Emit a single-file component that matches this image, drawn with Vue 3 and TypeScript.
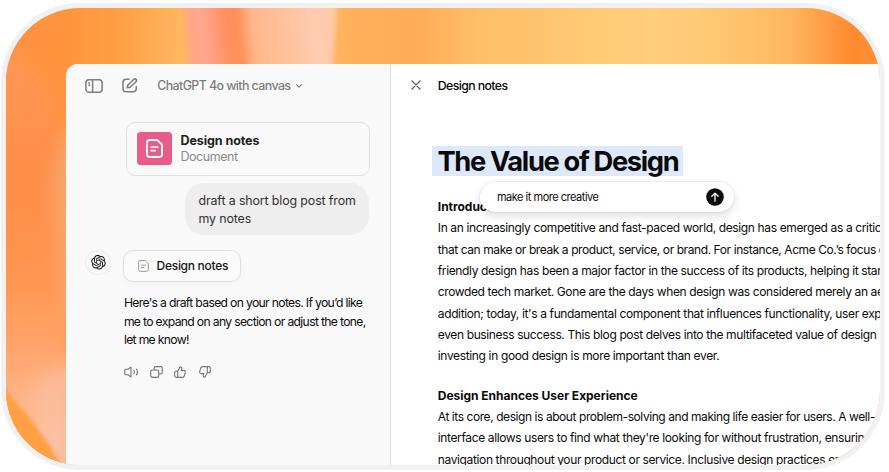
<script setup lang="ts">
interface Line {
  text: string
  tracking: number
}

interface Section {
  heading: string
  lines: Line[]
}

const sections: Section[] = [
  {
    heading: 'Introduction',
    lines: [
      { text: 'In an increasingly competitive and fast-paced world, design has emerged as a critic', tracking: -0.37 },
      { text: 'that can make or break a product, service, or brand. For instance, Acme Co.’s focus o', tracking: -0.42 },
      { text: 'friendly design has been a major factor in the success of its products, helping it star', tracking: -0.37 },
      { text: 'crowded tech market. Gone are the days when design was considered merely an ae', tracking: -0.38 },
      { text: "addition; today, it's a fundamental component that influences functionality, user exp", tracking: -0.37 },
      { text: 'even business success. This blog post delves into the multifaceted value of design', tracking: -0.37 },
      { text: 'investing in good design is more important than ever.', tracking: -0.35 },
    ],
  },
  {
    heading: 'Design Enhances User Experience',
    lines: [
      { text: 'At its core, design is about problem-solving and making life easier for users. A well-', tracking: -0.43 },
      { text: "interface allows users to find what they're looking for without frustration, ensuring", tracking: -0.37 },
      { text: 'navigation throughout your product or service. Inclusive design practices en', tracking: -0.37 },
    ],
  },
]
</script>

<template>
  <div class="frame">
    <svg class="backdrop" viewBox="6 8 874 458" preserveAspectRatio="none">
      <defs>
        <linearGradient id="sky" gradientUnits="userSpaceOnUse" x1="6" y1="0" x2="880" y2="0">
          <stop offset="0" stop-color="#ff9140" />
          <stop offset="0.07" stop-color="#ff943f" />
          <stop offset="0.13" stop-color="#ff9f46" />
          <stop offset="0.2" stop-color="#ffb75d" />
          <stop offset="0.36" stop-color="#ffb765" />
          <stop offset="0.4" stop-color="#ffb05b" />
          <stop offset="0.47" stop-color="#ffac56" />
          <stop offset="0.54" stop-color="#ffbe68" />
          <stop offset="0.65" stop-color="#ffc971" />
          <stop offset="0.74" stop-color="#ffcf7f" />
          <stop offset="0.84" stop-color="#ffc46c" />
          <stop offset="0.9" stop-color="#ffb55c" />
          <stop offset="0.945" stop-color="#ff9840" />
          <stop offset="0.97" stop-color="#ff8a2e" />
          <stop offset="1" stop-color="#ff8f34" />
        </linearGradient>
        <linearGradient id="band" gradientUnits="userSpaceOnUse" x1="182" y1="36" x2="336" y2="20">
          <stop offset="0" stop-color="#ffa97d" />
          <stop offset="0.14" stop-color="#ffa88e" />
          <stop offset="0.3" stop-color="#ff8e5c" />
          <stop offset="0.37" stop-color="#ff9059" />
          <stop offset="0.46" stop-color="#ffb78a" />
          <stop offset="0.65" stop-color="#ffc199" />
          <stop offset="0.85" stop-color="#ffcbb0" />
          <stop offset="1" stop-color="#ffc9a6" />
        </linearGradient>
        <linearGradient id="side" gradientUnits="userSpaceOnUse" x1="0" y1="60" x2="0" y2="466">
          <stop offset="0" stop-color="#ff9654" />
          <stop offset="0.3" stop-color="#ff8e48" />
          <stop offset="0.55" stop-color="#ff9651" />
          <stop offset="0.75" stop-color="#ffa873" />
          <stop offset="0.9" stop-color="#fdbd96" />
          <stop offset="1" stop-color="#f9c3ad" />
        </linearGradient>
        <filter id="soft" x="-50%" y="-50%" width="200%" height="200%"><feGaussianBlur stdDeviation="9" /></filter>
        <filter id="edge" x="-20%" y="-20%" width="140%" height="140%"><feGaussianBlur stdDeviation="2.200" /></filter>
      </defs>
      <rect x="6" y="8" width="874" height="458" fill="url(#sky)" />
      <path d="M183 -5L188 75H332L338 -5z" fill="url(#band)" filter="url(#edge)" />
      <path d="M-30 0L20 55L48 90L72 170V500H-30z" fill="url(#side)" filter="url(#soft)" />
      <path d="M90 105L62 140L52 185L58 250L66 320H90z" fill="#f5ad74" opacity="0.8" filter="url(#soft)" />
      <path d="M90 350L56 370L30 385L60 470H90z" fill="#f9c3a8" opacity="0.6" filter="url(#soft)" />
      <path d="M-10 372L6 391L28 417L50 447L66 474H-10z" fill="#ff9f43" filter="url(#edge)" />
    </svg>

    <div class="window">
      <aside class="chat">
        <header class="chat-bar">
          <svg class="ic-side" viewBox="0 0 18 14" fill="none" stroke="currentColor" stroke-width="1.500">
            <rect x="0.900" y="0.800" width="16.200" height="12.400" rx="3" />
            <path d="M7.600 1v12M3.200 4h2M3.200 6.200h2" />
          </svg>
          <svg class="ic-edit" viewBox="0 0 16 15" fill="none" stroke="currentColor" stroke-width="1.500" stroke-linecap="round" stroke-linejoin="round">
            <path d="M7 1.300H4.300C2.300 1.300 1 2.500 1 4.400v6.200C1 12.600 2.300 13.800 4.300 13.800h6.700c2 0 3.300-1.200 3.300-3.200V8.600" />
            <path d="M5.200 9.800l.5-2.600 5.900-5.700c.7-.7 1.700-.7 2.400-.1.700.7.700 1.600 0 2.300L8.100 9.300z" />
          </svg>
          <span class="model">ChatGPT 4o with canvas</span>
          <svg class="ic-chev" viewBox="0 0 8 6" fill="none" stroke="currentColor" stroke-width="1.100" stroke-linecap="round" stroke-linejoin="round">
            <path d="M1.400 1.700L4 4.200l2.600-2.500" />
          </svg>
        </header>

        <div class="file">
          <div class="file-icon">
            <svg viewBox="0 0 18 20" fill="none" stroke="currentColor" stroke-width="1.900" stroke-linecap="round" stroke-linejoin="round">
              <path d="M4 1h7.700L17 6v10.200c0 1.700-1.100 2.800-2.800 2.800H4c-1.800 0-3-1.100-3-2.800V3.800C1 2.100 2.200 1 4 1z" />
              <path d="M5.400 8.500h7M5.400 12.300h4.200" />
            </svg>
          </div>
          <div class="file-text">
            <strong>Design notes</strong>
            <span>Document</span>
          </div>
        </div>

        <div class="bubble">draft a short blog post from<br />my notes</div>

        <div class="reply">
          <div class="avatar">
            <svg viewBox="0 0 24 24" fill="currentColor">
              <path d="M22.2819 9.8211a5.9847 5.9847 0 0 0-.5157-4.9108 6.0462 6.0462 0 0 0-6.5098-2.9A6.0651 6.0651 0 0 0 4.9807 4.1818a5.9847 5.9847 0 0 0-3.9977 2.9 6.0462 6.0462 0 0 0 .7427 7.0966 5.98 5.98 0 0 0 .511 4.9107 6.051 6.051 0 0 0 6.5146 2.9001A5.9847 5.9847 0 0 0 13.2599 24a6.0557 6.0557 0 0 0 5.7718-4.2058 5.9894 5.9894 0 0 0 3.9977-2.9001 6.0557 6.0557 0 0 0-.7475-7.0729zm-9.022 12.6081a4.4755 4.4755 0 0 1-2.8764-1.0408l.1419-.0804 4.7783-2.7582a.7948.7948 0 0 0 .3927-.6813v-6.7369l2.02 1.1686a.071.071 0 0 1 .038.052v5.5826a4.504 4.504 0 0 1-4.4945 4.4944zm-9.6607-4.1254a4.4708 4.4708 0 0 1-.5346-3.0137l.142.0852 4.783 2.7582a.7712.7712 0 0 0 .7806 0l5.8428-3.3685v2.3324a.0804.0804 0 0 1-.0332.0615L9.74 19.9502a4.4992 4.4992 0 0 1-6.1408-1.6464zM2.3408 7.8956a4.485 4.485 0 0 1 2.3655-1.9728V11.6a.7664.7664 0 0 0 .3879.6765l5.8144 3.3543-2.0201 1.1685a.0757.0757 0 0 1-.071 0l-4.8303-2.7865A4.504 4.504 0 0 1 2.3408 7.872zm16.5963 3.8558L13.1038 8.364 15.1192 7.2a.0757.0757 0 0 1 .071 0l4.8303 2.7913a4.4944 4.4944 0 0 1-.6765 8.1042v-5.6772a.79.79 0 0 0-.407-.667zm2.0107-3.0231l-.142-.0852-4.7735-2.7818a.7759.7759 0 0 0-.7854 0L9.409 9.2297V6.8974a.0662.0662 0 0 1 .0284-.0615l4.8303-2.7866a4.4992 4.4992 0 0 1 6.6802 4.66zM8.3065 12.863l-2.02-1.1638a.0804.0804 0 0 1-.038-.0567V6.0742a4.4992 4.4992 0 0 1 7.3757-3.4537l-.142.0805L8.704 5.459a.7948.7948 0 0 0-.3927.6813zm1.0976-2.3654l2.602-1.4998 2.6069 1.4998v2.9994l-2.5974 1.4997-2.6067-1.4997Z" />
            </svg>
          </div>
          <div class="reply-body">
            <button class="doc-btn" type="button">
              <svg viewBox="0 0 11 12" fill="none" stroke="currentColor" stroke-width="1" stroke-linecap="round" stroke-linejoin="round">
                <path d="M2.300.6h5.100l3 2.900v6.200c0 1-.7 1.700-1.700 1.700H2.300c-1 0-1.700-.7-1.700-1.700V2.300C.6 1.300 1.300.6 2.300.6z" />
                <path d="M3.200 5.200h4.500M3.200 7.500h2.700" />
              </svg>
              <span>Design notes</span>
            </button>
            <p class="msg">
              Here's a draft based on your notes. If you’d like<br />me to expand on any section or adjust the tone,<br />let me know!
            </p>
            <div class="actions">
              <svg class="a-vol" viewBox="0 0 15 12" fill="none" stroke="currentColor" stroke-width="1.100" stroke-linecap="round" stroke-linejoin="round">
                <path d="M7 1.100v9.800L3.800 8.700H1.900C1.200 8.700.7 8.300.7 7.600V4.400c0-.7.500-1.100 1.200-1.100h1.900z" />
                <path d="M9.800 4.400c.7.900.7 2.300 0 3.200M12.300 3c1.400 1.700 1.400 4.300 0 6" />
              </svg>
              <svg class="a-copy" viewBox="0 0 13 12" fill="none" stroke="currentColor" stroke-width="1.100" stroke-linejoin="round">
                <rect x="0.700" y="4" width="8" height="7.400" rx="1.700" />
                <path d="M4.200 4V2.300c0-1 .7-1.700 1.700-1.700h4.700c1 0 1.700.7 1.700 1.700v4c0 1-.7 1.700-1.700 1.700H8.700" />
              </svg>
              <svg class="a-up" viewBox="0 0 12 12" fill="none" stroke="currentColor" stroke-width="1.100" stroke-linejoin="round">
                <path d="M3.700 5.200L6.100.7c1.200 0 1.900.9 1.600 2L7.200 4.400h2.600c1.100 0 1.800.9 1.500 1.900l-1 3.600c-.2.9-.9 1.500-1.900 1.500H2.300c-1 0-1.700-.6-1.700-1.600v-3c0-1 .7-1.600 1.700-1.600zM3.700 5.200v6.200" />
              </svg>
              <svg class="a-down" viewBox="0 0 12 12" fill="none" stroke="currentColor" stroke-width="1.100" stroke-linejoin="round">
                <path d="M8.300 6.800L5.900 11.300c-1.200 0-1.900-.9-1.600-2l.5-1.700H2.200C1.100 7.600.4 6.700.7 5.700l1-3.600C1.900 1.200 2.600.6 3.600.6h6.100c1 0 1.700.6 1.700 1.600v3c0 1-.7 1.600-1.700 1.600zM8.300 6.800V.6" />
              </svg>
            </div>
          </div>
        </div>
      </aside>

      <main class="canvas">
        <header class="canvas-bar">
          <svg viewBox="0 0 10 10" fill="none" stroke="currentColor" stroke-width="1.300" stroke-linecap="round">
            <path d="M.9.9l8.200 8.200M9.100.9L.9 9.100" />
          </svg>
          <span>Design notes</span>
        </header>
        <article class="doc">
          <h1>The Value of Design</h1>
          <section v-for="s in sections" :key="s.heading">
            <h2>{{ s.heading }}</h2>
            <p v-for="l in s.lines" :key="l.text" :style="{ letterSpacing: l.tracking + 'px' }">{{ l.text }}</p>
          </section>
        </article>
        <div class="prompt">
          <span>make it more creative</span>
          <svg viewBox="0 0 18 18" fill="none">
            <circle cx="9" cy="9" r="8.800" fill="#0d0d0d" />
            <path d="M9 13V5.300M5.800 8.300L9 5.100l3.200 3.200" stroke="#fff" stroke-width="1.300" stroke-linecap="round" stroke-linejoin="round" />
          </svg>
        </div>
      </main>
    </div>
  </div>
</template>

<style>
body {
  background: #fff;
  overflow: hidden;
}
</style>

<style scoped>
* {
  box-sizing: border-box;
}

.frame {
  position: relative;
  width: 884px;
  height: 467px;
  margin: 3.400px 0 0 1px;
  padding: 56px 0 0 60.400px;
  border: 5px solid #f1f1f1;
  border-radius: 79px;
  overflow: hidden;
  font-family: "Inter", "Liberation Sans", sans-serif;
  background: #f1f1f1;
}

.backdrop {
  position: absolute;
  inset: 0;
  width: 100%;
  height: 100%;
}

.window {
  position: relative;
  display: flex;
  height: 401px;
  border-top-left-radius: 12px;
  overflow: hidden;
  background: #fff;
}

.chat {
  flex: none;
  width: 324.500px;
  border-right: 1px solid #dedede;
  background: #f9f9f9;
  color: #0d0d0d;
}

.chat-bar {
  display: flex;
  align-items: center;
  height: 43px;
  padding-left: 18.800px;
  color: #7d7d7d;
}

.ic-side { width: 18px; height: 14px; }
.ic-edit { width: 16px; height: 15px; margin-left: 19px; }
.model {
  margin-left: 19px;
  font-size: 12.400px;
  font-weight: 450;
  letter-spacing: -0.580px;
  white-space: nowrap;
}
.ic-chev { width: 8px; height: 6px; margin-left: 4.500px; }

.file {
  display: flex;
  align-items: center;
  width: 244px;
  height: 54px;
  margin: 14.500px 0 0 59.600px;
  padding-left: 10px;
  border: 1.500px solid #dfdfdf;
  border-radius: 9px;
}

.file-icon {
  display: flex;
  align-items: center;
  justify-content: center;
  width: 35.500px;
  height: 33px;
  border-radius: 3.500px;
  background: #e85d88;
  color: #fff;
}
.file-icon svg { width: 17px; height: 19px; }

.file-text {
  display: flex;
  flex-direction: column;
  margin-left: 8px;
  font-size: 12.500px;
  line-height: 15.500px;
}
.file-text strong { font-weight: 650; letter-spacing: -0.080px; color: #212121; }
.file-text span { color: #8a8a8a; letter-spacing: -0.450px; }

.bubble {
  width: 184px;
  height: 52px;
  margin: 7px 0 0 118.600px;
  padding: 9px 0 0 13.500px;
  border-radius: 19px;
  background: #eeeeee;
  color: #303030;
  font-size: 12.400px;
  line-height: 18px;
  letter-spacing: -0.120px;
  white-space: nowrap;
}

.reply {
  display: flex;
  margin-top: 15px;
  padding-left: 18.700px;
}

.avatar {
  display: flex;
  align-items: center;
  justify-content: center;
  width: 26px;
  height: 25px;
  border: 1px solid #ececec;
  border-radius: 50%;
}
.avatar svg { width: 15px; height: 14.500px; }

.reply-body { margin-left: 12px; }

.doc-btn {
  display: flex;
  align-items: center;
  width: 118px;
  height: 32px;
  padding: 0 0 0 13.500px;
  border: 1.500px solid #dfdfdf;
  border-radius: 10px;
  background: #fafafa;
  box-shadow: 0 3px 6px rgba(0, 0, 0, 0.03);
  font-family: inherit;
  font-size: 12px;
  font-weight: 550;
  letter-spacing: -0.290px;
  color: #161616;
}
.doc-btn svg { width: 11px; height: 12px; margin-right: 8px; color: #9a9a9a; }

.msg {
  margin: 12.500px 0 0 0.800px;
  font-size: 12.200px;
  line-height: 18.400px;
  letter-spacing: -0.680px;
  white-space: nowrap;
}

.actions {
  display: flex;
  align-items: center;
  margin-top: 16px;
  padding-left: 1px;
  color: #757575;
}
.actions svg { height: 12px; }
.a-vol { width: 15px; margin-right: 10.500px; }
.a-copy { width: 13px; margin-right: 11.500px; }
.a-up { width: 12px; margin-right: 12.500px; }
.a-down { width: 12px; }

.canvas {
  position: relative;
  flex: 1;
  min-width: 0;
  overflow: hidden;
  color: #0a0a0a;
}

.canvas-bar {
  display: flex;
  align-items: center;
  height: 42px;
  padding-left: 20.600px;
  font-size: 12.300px;
  font-weight: 500;
  letter-spacing: -0.600px;
}
.canvas-bar svg { width: 10px; height: 10px; margin-right: 16.300px; color: #555; }

.doc { padding: 39.500px 0 0 46.900px; }

h1 {
  width: 251px;
  height: 30px;
  margin: 0 0 20px -5.500px;
  padding: 0.800px 0 0 5.200px;
  background: #dde8fb;
  font-size: 27.300px;
  font-weight: 700;
  line-height: 30px;
  letter-spacing: -1.360px;
  white-space: nowrap;
}

section { margin-bottom: 18px; }

h2, p {
  margin: 0;
  font-size: 12px;
  line-height: 21.350px;
  white-space: nowrap;
}
h2 { font-weight: 700; letter-spacing: -0.020px; }

.prompt {
  position: absolute;
  top: 118px;
  left: 88.700px;
  display: flex;
  align-items: center;
  justify-content: space-between;
  width: 254px;
  height: 29.500px;
  padding: 0 10px 0 17.300px;
  border-radius: 15px;
  background: #fff;
  box-shadow: 0 0 0 1px rgba(0, 0, 0, 0.05), 0 4px 10px rgba(0, 0, 0, 0.13);
  font-size: 11px;
  letter-spacing: -0.480px;
}
.prompt svg { width: 18px; height: 18px; }
</style>
